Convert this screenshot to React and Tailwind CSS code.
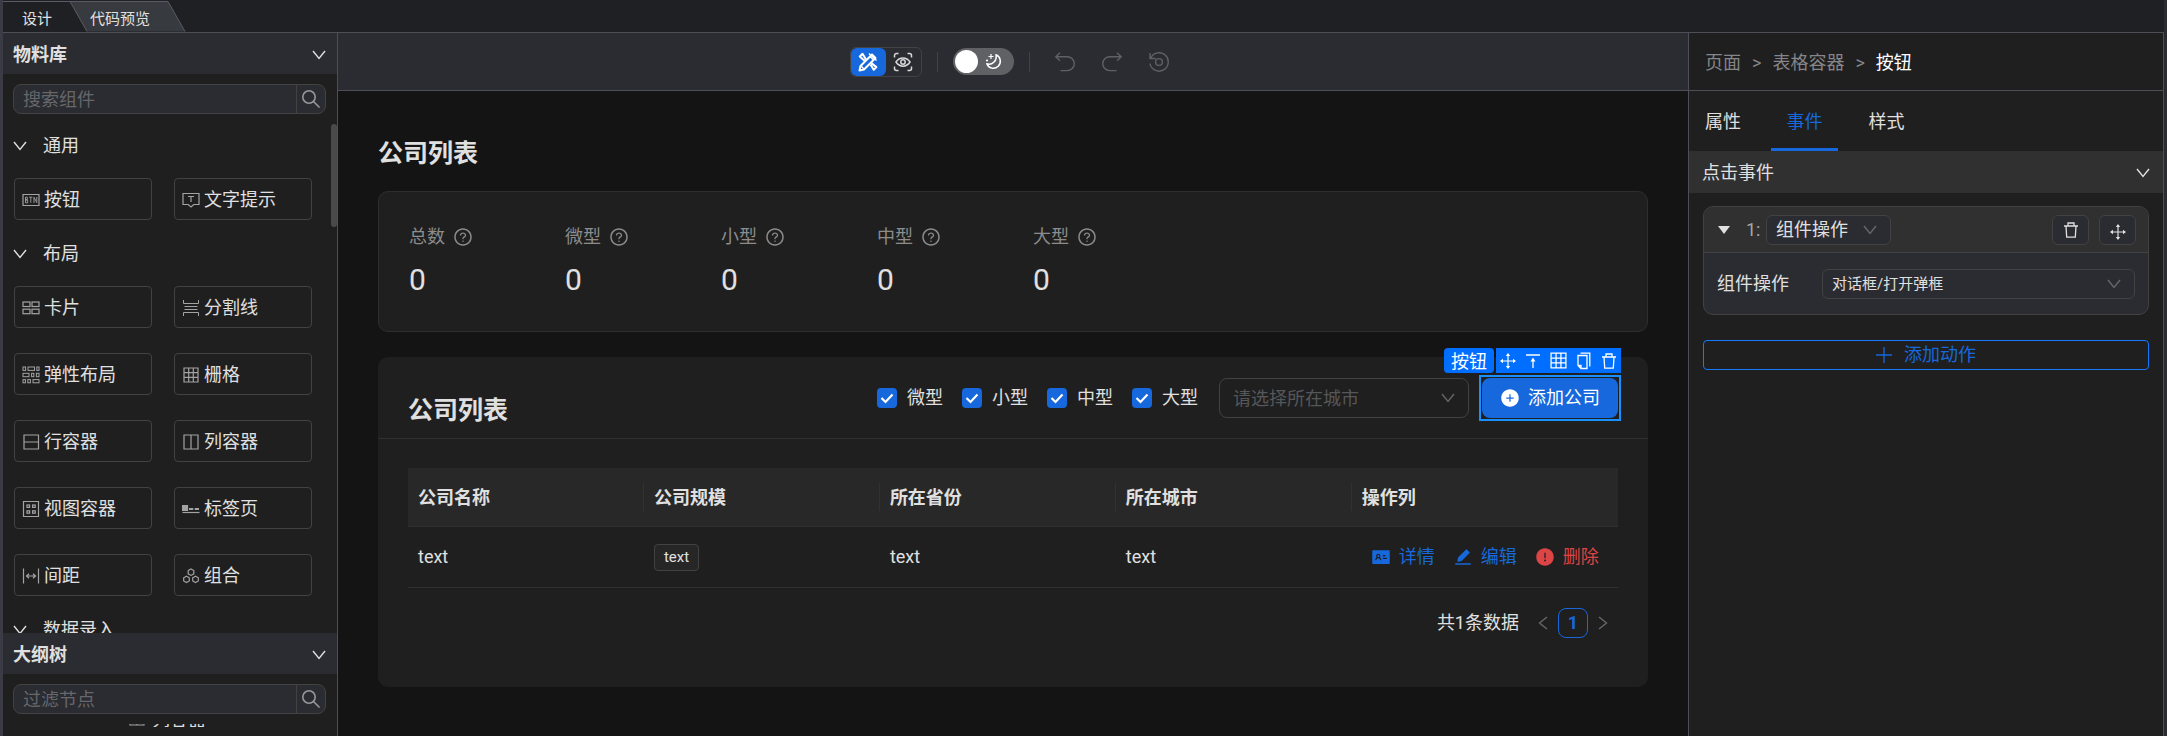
import React from "react";
import {
  AiOutlineQuestionCircle,
  AiFillPlusCircle,
  AiFillIdcard,
  AiFillEdit,
  AiFillExclamationCircle,
} from "react-icons/ai";

const stroke = { fill: "none", stroke: "currentColor" };

function Chevron({ className = "" }) {
  return (
    <svg viewBox="0 0 14 10" className={`h-[10px] w-[14px] shrink-0 ${className}`} {...stroke} strokeWidth="1.4" aria-hidden="true">
      <path d="M1 1l6 7.5L13 1" />
    </svg>
  );
}

function SearchIcon() {
  return (
    <svg viewBox="0 0 20 20" className="size-5" {...stroke} strokeWidth="1.6" aria-hidden="true">
      <circle cx="8" cy="8" r="6.2" />
      <path d="M12.5 12.5l6 6" />
    </svg>
  );
}

function MoveIcon({ className = "" }) {
  return (
    <svg viewBox="0 0 16 16" className={`size-4 ${className}`} {...stroke} strokeWidth="1.2" aria-hidden="true">
      <path d="M8 1v14M1 8h14" />
      <path d="M8 0l2.2 3H5.8zM8 16l2.2-3H5.8zM0 8l3-2.2v4.4zM16 8l-3-2.2v4.4z" fill="currentColor" stroke="none" />
    </svg>
  );
}

function TrashIcon({ className = "" }) {
  return (
    <svg viewBox="0 0 16 16" className={`size-4 ${className}`} {...stroke} strokeWidth="1.3" aria-hidden="true">
      <path d="M1 4h14M5 4V1h6v3M3 4l.7 11.2h8.6L13 4" />
    </svg>
  );
}

function GridIcon({ className = "size-4" }) {
  return (
    <svg viewBox="0 0 16 16" className={className} {...stroke} strokeWidth="1.2" aria-hidden="true">
      <path d="M1 1h14v14H1zM1 5.7h14M1 10.3h14M5.7 1v14M10.3 1v14" />
    </svg>
  );
}

function rects(list) {
  return list.map(([x, y, w, h], i) => <rect key={i} x={x} y={y} width={w} height={h} />);
}

const glyphs = {
  button: (
    <>
      <path d="M1 3.5h16v11H1z" />
      <path d="M3.5 6.2v5.6M3.5 6.2h1.8v2.5H3.5M3.5 9h2.2v2.8H3.5M7.2 6.2h3.2M8.8 6.2v5.6M12 12V6.2l2.8 5.4V6" strokeWidth="0.9" />
    </>
  ),
  tooltip: (
    <>
      <path d="M1 2.5h16v11h-5.2L9 16l-2.8-2.5H1z" />
      <path d="M6 5.5h6M9 5.5v5.5" />
    </>
  ),
  card: rects([[1, 3, 7, 4.5], [10, 3, 7, 4.5], [1, 10.2, 7, 4.5], [10, 10.2, 7, 4.5]]),
  divider: <path d="M1.5 1v3.5h15V1M1.5 17v-3.500h15V17M2.5 7.500h13M2.5 10.500h13" strokeWidth="1" />,
  flex: (
    <g strokeWidth="1">
      {rects([[1, 1, 2.6, 3.4], [6, 1, 6.5, 3.4], [14.8, 1, 2.2, 3.4], [1, 7.3, 6, 3.4], [9.6, 7.3, 2.2, 3.4], [14.4, 7.3, 2.6, 3.4], [1, 13.6, 2.4, 3.2], [5.8, 13.6, 2.6, 3.2], [11, 13.6, 6, 3.2]])}
    </g>
  ),
  grid: <path d="M2 2h14v14H2zM2 6.7h14M2 11.3h14M6.7 2v14M11.3 2v14" />,
  row: <path d="M2 2h14.5v14H2zM2 9h14.5" />,
  column: <path d="M2 2h14v14H2zM9 2v14" />,
  view: (
    <>
      <path d="M1.5 1.5h15v15h-15z" />
      {rects([[5, 5, 2.6, 2.4], [10.6, 5, 2.6, 2.4], [5, 10.8, 2.6, 2.4], [10.6, 10.8, 2.6, 2.4]])}
    </>
  ),
  tabs: (
    <>
      <path d="M.5 5.5h5v5h-5z" fill="currentColor" />
      <path d="M7 9h4.3M12.7 9h4.3" strokeWidth="2" />
      <path d="M.5 12.5h17" />
    </>
  ),
  space: <path d="M1.5 1.5v15M16.5 1.5v15M4.5 9h9M7 6.7L4.5 9 7 11.3M11 6.7L13.5 9 11 11.3" />,
  group: (
    <path d="M9 2l2.8 1.6v3.2L9 8.4 6.2 6.8V3.6zM4.5 9.2l2.8 1.6v3.2l-2.8 1.6L1.700 14v-3.200zM13.5 9.2l2.8 1.6v3.2l-2.8 1.6-2.8-1.6v-3.200z" />
  ),
};

function Glyph({ name }) {
  return (
    <svg viewBox="0 0 18 18" className="size-[18px] shrink-0 text-[#a3a3a3]" {...stroke} strokeWidth="1.2" aria-hidden="true">
      {glyphs[name]}
    </svg>
  );
}

function Material({ icon, label }) {
  return (
    <button type="button" className="flex h-[42px] w-[138px] items-center gap-1 rounded border border-[#424242] px-[7px] pt-0.5 text-[#e0e0e0]">
      <Glyph name={icon} />
      {label}
    </button>
  );
}

function MaterialSection({ title, items = [] }) {
  return (
    <section>
      <button type="button" className="flex h-11 w-full items-center gap-4 pl-[10px] text-[#e0e0e0]">
        <Chevron />
        {title}
      </button>
      <div className="grid grid-cols-[138px_138px] gap-x-[22px] gap-y-[25px] px-[11px] pt-[10px] pb-3">
        {items.map(([icon, label]) => (
          <Material key={label} icon={icon} label={label} />
        ))}
      </div>
    </section>
  );
}

function PanelHeader({ title }) {
  return (
    <button type="button" className="flex h-[41px] w-full shrink-0 items-center justify-between bg-[#2b2c31] pt-0.5 pr-[11px] pl-[10px] font-bold text-[#e0e0e0]">
      {title}
      <Chevron />
    </button>
  );
}

function SearchBox({ placeholder }) {
  return (
    <form className="mx-[10px] mt-[10px] flex h-[30px] w-[313px] shrink-0 overflow-hidden rounded-lg border border-[#424242] bg-[#2b2c31]">
      <input aria-label={placeholder} placeholder={placeholder} className="min-w-0 flex-1 bg-transparent px-[9px] pt-0.5 text-[#e0e0e0] outline-none placeholder:text-[#66676b]" />
      <button type="button" aria-label="搜索" className="flex w-[29px] items-center justify-center border-l border-[#424242] text-[#97989b]">
        <SearchIcon />
      </button>
    </form>
  );
}

function LeftPanel() {
  return (
    <aside className="flex w-[335px] shrink-0 flex-col border-r border-[#4d4e58] bg-[#1f1f1f]">
      <PanelHeader title="物料库" />
      <SearchBox placeholder="搜索组件" />
      <div className="mt-[10px] flex min-h-0 flex-1 overflow-hidden">
        <div className="min-w-0 flex-1">
          <MaterialSection title="通用" items={[["button", "按钮"], ["tooltip", "文字提示"]]} />
          <MaterialSection
            title="布局"
            items={[
              ["card", "卡片"],
              ["divider", "分割线"],
              ["flex", "弹性布局"],
              ["grid", "栅格"],
              ["row", "行容器"],
              ["column", "列容器"],
              ["view", "视图容器"],
              ["tabs", "标签页"],
              ["space", "间距"],
              ["group", "组合"],
            ]}
          />
          <MaterialSection title="数据录入" />
        </div>
        <div className="h-[103px] w-[6px] rounded-full bg-[#4a4a4a]" />
      </div>
      <div className="flex h-[103px] shrink-0 flex-col">
        <PanelHeader title="大纲树" />
        <SearchBox placeholder="过滤节点" />
        <div className="mt-[10px] flex h-[3px] items-end gap-[6px] overflow-hidden pl-[125px] leading-[15px] text-[#e0e0e0]">
          <Glyph name="column" />
          <span>列容器</span>
        </div>
      </div>
    </aside>
  );
}

function EditorTabs() {
  return (
    <nav className="relative flex h-[33px] shrink-0 border-b border-[#4d4e58] text-[15px] text-[#e0e0e0]">
      <svg viewBox="0 0 186 31" className="absolute bottom-0 left-0 h-[31px] w-[186px]" aria-hidden="true">
        <path d="M67 .5h98l17 30H84z" fill="#373a3e" />
        <path d="M0 .5h165l17 30M67 .5l17 30" fill="none" stroke="#5a5b66" />
      </svg>
      <button type="button" className="relative w-[68px] pt-[6px] pl-[19px] text-left">设计</button>
      <button type="button" className="relative w-[110px] pt-[6px] pl-[19px] text-left">代码预览</button>
    </nav>
  );
}

function Toolbar() {
  return (
    <div className="flex h-[58px] shrink-0 items-center justify-center border-b border-[#4d4e58] bg-[#2b2c31] pr-2">
      <div className="flex h-[30px] w-[72px] rounded-md border border-[#424242]">
        <button type="button" aria-label="编辑" className="flex w-[35px] items-center justify-center rounded-md bg-[#1668dc] text-white">
          <svg viewBox="0 0 20 20" className="size-5" {...stroke} strokeWidth="2" strokeLinejoin="round" aria-hidden="true">
            <path d="M1.500 18.500l1-4.500L14 2.500l3.500 3.500L6 17.500z" />
            <path d="M8 7.500L4.500 1.800 1.800 4.500l5 4.500M12.500 12.500l3.200 5.300 2.700-2.700-5-4" />
            <path d="M12 4.500l3.500 3.500M3 14l3 3M11 1.500l7.500 7" strokeWidth="1.400" />
          </svg>
        </button>
        <button type="button" aria-label="预览" className="flex w-[35px] items-center justify-center text-[#d8d8d8]">
          <svg viewBox="0 0 20 20" className="size-5" {...stroke} strokeWidth="1.500" aria-hidden="true">
            <path d="M1.500 5.500v-2a2 2 0 012-2h2M14.500 1.500h2a2 2 0 012 2v2M18.500 14.500v2a2 2 0 01-2 2h-2M5.500 18.500h-2a2 2 0 01-2-2v-2" />
            <path d="M3 10c3.500-5.500 10.500-5.500 14 0-3.500 5.500-10.500 5.500-14 0z" />
            <circle cx="10" cy="10" r="2.200" />
          </svg>
        </button>
      </div>
      <div className="mx-[15px] h-5 w-px bg-[#424347]" />
      <button type="button" role="switch" aria-checked="false" aria-label="深色模式" className="flex h-[27px] w-[61px] items-center gap-[7px] rounded-full bg-[#606164] px-[2px] text-white">
        <span className="size-[23px] rounded-full bg-white" />
        <svg viewBox="0 0 17 17" className="size-[17px]" {...stroke} strokeWidth="1.500" aria-hidden="true">
          <path d="M11 1.800a7 7 0 11-9.200 9c5 2 10.500-3 9.200-9z" strokeLinejoin="round" />
          <path d="M6 1v5M3.500 3.500h5M2 6.500v2M1 7.500h2" strokeWidth="1.200" />
        </svg>
      </button>
      <div className="mx-[15px] h-5 w-px bg-[#424347]" />
      <div className="flex gap-[27px] pl-[10px] text-[#5f6064]">
        <button type="button" aria-label="撤销">
          <svg viewBox="0 0 20 20" className="size-5" {...stroke} strokeWidth="1.400" aria-hidden="true">
            <path d="M5 .7L.8 4.700 5 8.700M1 4.700h11.300a6.700 6.700 0 010 13.900H5.500" />
          </svg>
        </button>
        <button type="button" aria-label="重做">
          <svg viewBox="0 0 20 20" className="size-5" {...stroke} strokeWidth="1.400" aria-hidden="true">
            <path d="M15 .7l4.200 4L15 8.700M19 4.700H7.700a6.700 6.700 0 000 13.900h6.800" />
          </svg>
        </button>
        <button type="button" aria-label="历史">
          <svg viewBox="0 0 20 20" className="size-5" {...stroke} strokeWidth="1.400" aria-hidden="true">
            <path d="M1 1v5.500h5.500M1.600 6.300A9.200 9.200 0 111 11.500" />
            <circle cx="10" cy="10" r="3.400" />
          </svg>
        </button>
      </div>
    </div>
  );
}

const stats = ["总数", "微型", "小型", "中型", "大型"];
const sizes = ["微型", "小型", "中型", "大型"];
const columns = ["公司名称", "公司规模", "所在省份", "所在城市", "操作列"];

function SizeCheckbox({ label }) {
  return (
    <label className="flex items-center gap-[10px] text-[#e0e0e0]">
      <span className="grid size-5">
        <input type="checkbox" defaultChecked className="col-start-1 row-start-1 size-5 appearance-none rounded bg-[#1668dc]" />
        <svg viewBox="0 0 20 20" className="pointer-events-none col-start-1 row-start-1 size-5 text-white" {...stroke} strokeWidth="2.200" aria-hidden="true">
          <path d="M4.500 10l4 4L15.500 6.500" />
        </svg>
      </span>
      {label}
    </label>
  );
}

function Select({ label, value, className = "", width }) {
  return (
    <span className={`grid items-center ${width}`}>
      <select aria-label={label} defaultValue={value} className={`col-start-1 row-start-1 w-full appearance-none border border-[#424242] outline-none ${className}`}>
        <option>{value}</option>
      </select>
      <Chevron className="pointer-events-none col-start-1 row-start-1 mr-[14px] justify-self-end text-[#66676b]" />
    </span>
  );
}

function SelectedButton() {
  return (
    <div className="relative -m-[3px] border-2 border-[#1890ff] p-px">
      <button type="button" className="flex h-10 items-center gap-2 rounded-lg bg-[#1668dc] px-[18px] text-white">
        <AiFillPlusCircle className="size-5" />
        添加公司
      </button>
      <div className="absolute -right-[2px] bottom-full mb-1 flex h-[25px] gap-[2px] text-white">
        <span className="flex w-[50px] items-center justify-center rounded bg-[#006eff] pt-0.5 whitespace-nowrap">按钮</span>
        <div className="flex w-[125px] items-center justify-around bg-[#006eff]">
          <button type="button" aria-label="移动"><MoveIcon /></button>
          <button type="button" aria-label="选择父级">
            <svg viewBox="0 0 16 16" className="size-4" {...stroke} strokeWidth="1.300" aria-hidden="true">
              <path d="M1 2h14M8 15V6" />
              <path d="M8 4.500l2.500 4h-5z" fill="currentColor" stroke="none" />
            </svg>
          </button>
          <button type="button" aria-label="布局"><GridIcon className="size-[17px]" /></button>
          <button type="button" aria-label="复制">
            <svg viewBox="0 0 16 18" className="h-[18px] w-4" {...stroke} strokeWidth="1.300" aria-hidden="true">
              <path d="M2 3.500h9v13H5l-3-3zM2 13.500h3v3M4.500 1.200h9.300v13.300" />
            </svg>
          </button>
          <button type="button" aria-label="删除"><TrashIcon /></button>
        </div>
      </div>
    </div>
  );
}

function Canvas() {
  return (
    <main className="min-h-0 flex-1 overflow-hidden bg-[#141414] px-10 pt-[42px] text-[#e0e0e0]">
      <h1 className="text-[25px] leading-[42px] font-bold">公司列表</h1>
      <section className="mt-4 flex h-[141px] rounded-[10px] border border-[#2e2e2e] bg-[#1f1f1f] pt-[31px] pl-[30px]">
        {stats.map((name) => (
          <div key={name} className="w-[156px]">
            <div className="flex items-center gap-2 leading-7 text-[#8c8c8c]">
              {name}
              <AiOutlineQuestionCircle className="size-5" />
            </div>
            <div className="mt-2 text-[30px] leading-[42px]">0</div>
          </div>
        ))}
      </section>
      <section className="mt-[25px] h-[330px] rounded-[10px] bg-[#1f1f1f]">
        <header className="flex h-[82px] items-start justify-between border-b border-[#303030] px-[30px] pt-[21px]">
          <h2 className="pt-3 text-[25px] leading-[42px] font-bold">公司列表</h2>
          <div className="flex items-center gap-[13px]">
            <div className="flex gap-[19px] pr-2">
              {sizes.map((s) => (
                <SizeCheckbox key={s} label={s} />
              ))}
            </div>
            <Select label="请选择所在城市" value="请选择所在城市" width="w-[250px]" className="h-10 rounded-lg bg-[#1f1f1f] px-[13px] pt-0.5 text-[#56575a]" />
            <SelectedButton />
          </div>
        </header>
        <div className="px-[30px] pt-[29px]">
          <table className="w-full table-fixed border-collapse text-left">
            <colgroup>
              <col className="w-[19.5%]" />
              <col className="w-[19.5%]" />
              <col className="w-[19.5%]" />
              <col className="w-[19.5%]" />
              <col />
            </colgroup>
            <thead>
              <tr className="h-[58px] border-b border-[#303030] bg-[#282828]">
                {columns.map((c, i) => (
                  <th key={c} className="p-0">
                    <div className={i < 4 ? "h-7 border-r border-[#323232] pl-[10px] leading-[30px]" : "h-7 pl-[10px] leading-[30px]"}>{c}</div>
                  </th>
                ))}
              </tr>
            </thead>
            <tbody>
              <tr className="h-[61px] border-b border-[#303030]">
                <td className="pl-[10px]">text</td>
                <td className="pl-[10px]">
                  <span className="inline-block rounded border border-[#424242] bg-[#262626] px-[9px] text-[15px] leading-[25px]">text</span>
                </td>
                <td className="pl-[10px]">text</td>
                <td className="pl-[10px]">text</td>
                <td className="pl-[19px]">
                  <div className="flex items-center gap-[18px]">
                    <button type="button" className="flex items-center gap-2 text-[#1668dc]">
                      <AiFillIdcard className="size-5" />详情
                    </button>
                    <button type="button" className="flex items-center gap-2 text-[#1668dc]">
                      <AiFillEdit className="size-5" />编辑
                    </button>
                    <button type="button" className="flex items-center gap-2 text-[#dc4446]">
                      <AiFillExclamationCircle className="size-5" />删除
                    </button>
                  </div>
                </td>
              </tr>
            </tbody>
          </table>
          <div className="mt-5 flex h-[30px] items-center justify-end pr-[5px]">
            <span className="mr-[14px]">共1条数据</span>
            <button type="button" aria-label="上一页" className="flex w-5 justify-center text-[#66676b]">
              <Chevron className="rotate-90" />
            </button>
            <button type="button" className="mx-[5px] size-[30px] rounded-lg border border-[#1668dc] font-bold text-[#1668dc]">1</button>
            <button type="button" aria-label="下一页" className="flex w-5 justify-center text-[#66676b]">
              <Chevron className="-rotate-90" />
            </button>
          </div>
        </div>
      </section>
    </main>
  );
}

function RightPanel() {
  return (
    <aside className="w-[476px] shrink-0 border-x border-[#4d4e58] bg-[#1f1f1f] text-[#e0e0e0]">
      <nav className="flex h-[58px] items-center gap-[11px] border-b border-[#4d4e58] px-4 pt-0.5 text-[#85868a]">
        <a href="#page">页面</a>
        <span>&gt;</span>
        <a href="#table">表格容器</a>
        <span>&gt;</span>
        <span className="text-white">按钮</span>
      </nav>
      <div className="flex h-[60px] pl-1">
        <button type="button" className="mr-[18px] w-[60px] border-b-[3px] border-transparent pt-[5px]">属性</button>
        <button type="button" className="mr-[15px] w-[67px] border-b-[3px] border-[#1668dc] pt-[5px] text-[#1668dc]">事件</button>
        <button type="button" className="w-[67px] border-b-[3px] border-transparent pt-[5px]">样式</button>
      </div>
      <button type="button" className="flex h-[42px] w-full items-center justify-between bg-[#303030] px-[13px] pt-0.5">
        点击事件
        <Chevron />
      </button>
      <div className="px-[14px] pt-[13px]">
        <section className="overflow-hidden rounded-[10px] border border-[#424242] bg-[#2b2c31]">
          <header className="flex h-[46px] items-center border-b border-[#424242] bg-[#303030] px-3">
            <button type="button" aria-label="折叠" className="mr-4 ml-[2px]">
              <svg viewBox="0 0 12 8" className="h-2 w-3" fill="#e0e0e0" aria-hidden="true">
                <path d="M0 0h12L6 8z" />
              </svg>
            </button>
            <span className="mr-1 w-4 text-[#a6a6a6]">1:</span>
            <Select label="动作类型" value="组件操作" width="w-[125px]" className="h-[30px] rounded-md bg-[#2b2c31] px-[9px]" />
            <button type="button" aria-label="删除" className="ml-auto flex h-[30px] w-[37px] items-center justify-center rounded-md border border-[#424242] bg-[#2b2c31]">
              <TrashIcon />
            </button>
            <button type="button" aria-label="移动" className="ml-[10px] flex h-[30px] w-[37px] items-center justify-center rounded-md border border-[#424242] bg-[#2b2c31] pt-1">
              <MoveIcon />
            </button>
          </header>
          <div className="flex h-[61px] items-center pr-[13px] pl-[13px]">
            <span className="w-[105px]">组件操作</span>
            <Select label="组件操作" value="对话框/打开弹框" width="flex-1" className="h-[30px] rounded-md bg-[#2b2c31] px-[9px] text-[15px]" />
          </div>
        </section>
        <button type="button" className="mt-[25px] flex h-[30px] w-full items-center justify-center gap-3 rounded border border-[#1677ff] text-[#1668dc]">
          <svg viewBox="0 0 16 16" className="size-4" {...stroke} strokeWidth="1.300" aria-hidden="true">
            <path d="M8 0v16M0 8h16" />
          </svg>
          添加动作
        </button>
      </div>
    </aside>
  );
}

export default function App() {
  return (
    <div className="h-screen bg-[#2b2c31] pr-[3px] font-['Roboto','Noto_Sans_CJK_SC',sans-serif] text-[18px] leading-[26px]">
      <div className="flex h-full flex-col border-l-[3px] border-[#3a3b44] bg-[#1f2024]">
        <EditorTabs />
        <div className="flex min-h-0 flex-1">
          <LeftPanel />
          <div className="flex min-w-0 flex-1 flex-col">
            <Toolbar />
            <Canvas />
          </div>
          <RightPanel />
        </div>
      </div>
    </div>
  );
}
